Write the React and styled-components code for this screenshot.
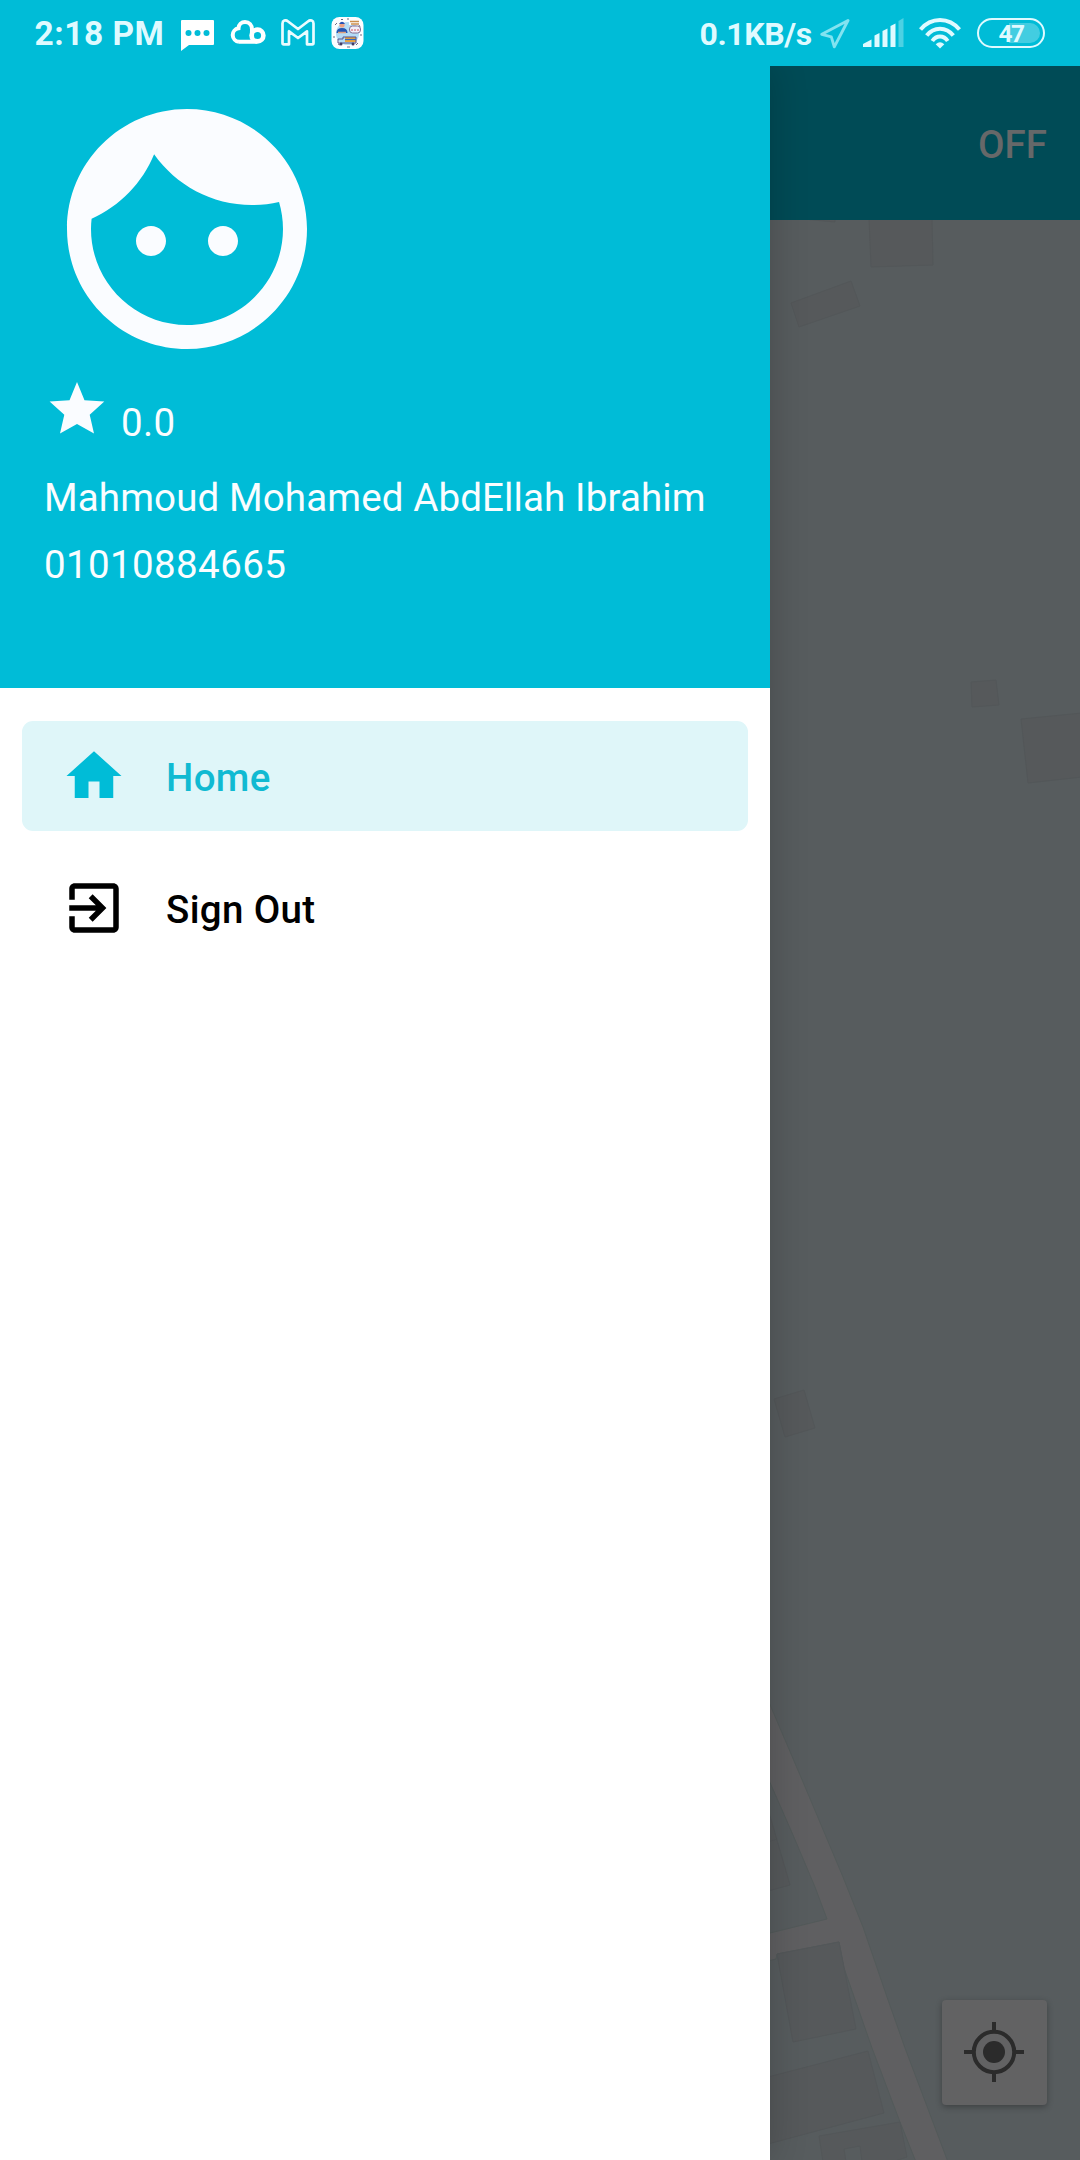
import React from "react";
import styled, { createGlobalStyle } from "styled-components";

const CYAN = "#00bcd7";
const STATUS = "#dffaff";

const GlobalStyle = createGlobalStyle`
  * { box-sizing: border-box; }
  body { margin: 0; font-family: Roboto, "Noto Sans", sans-serif; background: #fff; }
  svg { display: block; flex: none; }
`;

const Screen = styled.div`
  width: 1080px;
  height: 2160px;
  display: flex;
  flex-direction: column;
  overflow: hidden;
`;

const StatusBar = styled.header`
  position: relative;
  z-index: 2;
  height: 66px;
  flex: none;
  display: flex;
  justify-content: space-between;
  padding: 0 35px 0 34.500px;
  background: ${CYAN};
  color: ${STATUS};
`;

const StatusGroup = styled.div`
  display: flex;
  align-items: flex-start;
`;

const StatusText = styled.span`
  width: ${(p) => p.$width}px;
  font-size: ${(p) => p.$size}px;
  font-weight: 700;
  line-height: 68px;
  letter-spacing: ${(p) => p.$spacing || 0}px;
  white-space: nowrap;
`;

const StatusIcon = styled.svg`
  margin: ${(p) => p.$top}px 0 0 ${(p) => p.$gap}px;
`;

const Battery = styled.div`
  width: 68px;
  height: 30px;
  margin: 18px 0 0 16px;
  padding: 3px;
  border: 2.500px solid ${STATUS};
  border-radius: 15px;
  display: grid;
`;

const BatteryLevel = styled.div`
  grid-area: 1 / 1;
  border-radius: 10px;
  background: linear-gradient(90deg, transparent 47%, rgba(255, 255, 255, 0.26) 47%);
`;

const BatteryText = styled.span`
  grid-area: 1 / 1;
  align-self: center;
  text-align: center;
  font-size: 24.500px;
  font-weight: 700;
  line-height: 18px;
  letter-spacing: -1.500px;
  padding-top: 1px;
`;

const Body = styled.div`
  flex: 1;
  min-height: 0;
  display: flex;
`;

const Drawer = styled.aside`
  width: 770px;
  flex: none;
  z-index: 1;
  background: #fff;
  box-shadow: 0 0 36px rgba(0, 0, 0, 0.2);
`;

const Profile = styled.section`
  height: 622px;
  display: flex;
  flex-direction: column;
  align-items: flex-start;
  padding: 18.700px 44px 0;
  background: ${CYAN};
  color: #fafdff;
`;

const Avatar = styled.svg`
  margin-left: -1px;
  fill: #fafcff;
`;

const Rating = styled.div`
  height: 99.300px;
  display: flex;
  align-items: flex-start;
  padding: 9.300px 0 0 5px;
  gap: 16px;
`;

const ProfileText = styled.span`
  display: block;
  font-size: 38.500px;
  line-height: 51px;
  margin: ${(p) => p.$top || 0}px 0 0;
  letter-spacing: ${(p) => p.$spacing || 0}px;
  white-space: nowrap;
`;

const Nav = styled.nav`
  display: flex;
  flex-direction: column;
  gap: 22px;
  padding: 33px 22px;
`;

const NavItem = styled.a`
  height: 110px;
  display: flex;
  align-items: center;
  gap: 39px;
  padding-left: 39px;
  border-radius: 11px;
  font-size: 38.500px;
  font-weight: 500;
  line-height: 50px;
  letter-spacing: 0.350px;
  color: ${(p) => (p.$active ? "#10bad2" : "#000")};
  background: ${(p) => (p.$active ? "#dff6f9" : "transparent")};
  svg { fill: ${(p) => (p.$active ? CYAN : "#000")}; }
  span { padding-top: 3px; }
`;

const Main = styled.main`
  flex: 1;
  min-width: 0;
  display: flex;
  flex-direction: column;
`;

const AppBar = styled.div`
  height: 154px;
  flex: none;
  display: flex;
  justify-content: flex-end;
  align-items: center;
  padding: 2px 33px 0 0;
  background: #004b56;
  box-shadow: 0 2px 9px rgba(0, 0, 0, 0.22);
  color: #666869;
  font-size: 38.500px;
  font-weight: 500;
  z-index: 0;
`;

const MapArea = styled.div`
  position: relative;
  flex: 1;
  background: #575c5e;
`;

const LocateButton = styled.button`
  position: absolute;
  right: 33.500px;
  bottom: 55.500px;
  width: 105px;
  height: 105px;
  padding: 0;
  border: 0;
  border-radius: 4px;
  background: #626263;
  box-shadow: 0 2px 6px rgba(0, 0, 0, 0.3);
  display: grid;
  place-items: center;
`;

const buildings = [
  "23,-2 65,2 65,-2",
  "99,-2 101,47 163,45 162,-2",
  "21,83 81,61 90,86 29,107",
  "201,462 226,460 229,485 202,487",
  "251,499 312,493 312,557 258,563",
  "4,1179 34,1170 45,1208 15,1217",
  "-2,1589 20,1665 -2,1671",
  "7,1734 69,1722 86,1809 23,1822",
  "-2,1857 98,1831 114,1893 -2,1924",
];

function MapDrawing() {
  return (
    <svg width="310" height="1940" viewBox="0 0 310 1940">
      <path
        d="M-2 1480 L33 1562 L73 1657 L93 1707 L117 1777 L135 1828 L178 1942 H146 L130 1902 L102 1828 L74 1748 L69 1722 L7 1734 L6 1739 L-2 1741 V1713.500 L57 1699 L45 1667 L23 1615 L-2 1558 Z"
        fill="#5f5f61"
        stroke="#535a5a"
        strokeWidth="1"
      />
      <g fill="#56595b" stroke="#535759" strokeWidth="1">
        {buildings.map((points) => (
          <polygon key={points} points={points} />
        ))}
        <path
          d="M49 1916 L130 1902 L137 1937 L122 1942 H92 L90 1926 L74 1929 L76 1942 H53 Z"
        />
        <path d="M-2 1622 L7 1619" />
      </g>
    </svg>
  );
}

export default function App() {
  return (
    <>
      <GlobalStyle />
      <Screen>
        <StatusBar>
          <StatusGroup>
            <StatusText $width={146.500} $size={33.500} $spacing={0.500}>2:18 PM</StatusText>
            <StatusIcon $top={20} $gap={0} width="33" height="31" viewBox="0 0 33 31">
              <path d="M1 0H32Q33 0 33 1V24Q33 25 32 25H8L0 31V1Q0 0 1 0Z" fill="#fff" />
              <g fill={CYAN}>
                <circle cx="7.500" cy="13" r="3" />
                <circle cx="16.500" cy="13" r="3" />
                <circle cx="25.500" cy="13" r="3" />
              </g>
            </StatusIcon>
            <StatusIcon $top={20} $gap={15.500} width="36" height="24" viewBox="0 0 36 24">
              <path
                d="M9 21.800a6.800 6.800 0 0 1-.5-13.500C8.700 4.500 11.500 2 15 2c4.200 0 7 3 7 7.500l-.2 6.500M9 21.800H27"
                fill="none"
                stroke="#fff"
                strokeWidth="4"
              />
              <circle cx="27.500" cy="15.500" r="5.900" fill="none" stroke="#fff" strokeWidth="4.600" />
            </StatusIcon>
            <StatusIcon $top={19} $gap={15} width="34" height="27" viewBox="0 0 34 27">
              <path
                d="M1.500 4.500C1.500 1.500 4.600.5 6.800 2.200L17 10l10.200-7.800c2.200-1.700 5.300-.7 5.300 2.300V24q0 1.300-1.300 1.300H26V12.300L17 19 8 12.300v13H2.800Q1.500 25.300 1.500 24Z"
                fill="none"
                stroke="#eafcff"
                strokeWidth="2.700"
                strokeLinejoin="round"
              />
            </StatusIcon>
            <StatusIcon $top={17} $gap={16.500} width="33" height="33" viewBox="0 0 33 33">
              <rect width="32" height="32" x=".5" rx="8" fill="#fcfdff" />
              <circle cx="16.500" cy="16.500" r="11.500" fill="#b5dcf5" />
              <path d="M4 8l2-2M10 2.500h2M16 2h2M28 8l1 2M30 17v2M27 26l-2 2M19 30h-3M9 28l-2-1M3 21v-2" stroke="#6e6b80" />
              <path d="M18 2.500h11V8H18Z" fill="#fcfdff" />
              <circle cx="11" cy="8" r="2.600" fill="#eda184" />
              <path d="M8 7Q11 2.500 14 7Z" fill="#2752b4" />
              <path d="M5.500 16q0-5 5.500-5t5.500 5Z" fill="#2456b5" />
              <path d="M7 15.500h8" stroke="#e0a07c" strokeWidth="1.500" />
              <path d="M19 4.500h9M20 7h8" stroke="#cb8f4e" strokeWidth="1.300" />
              <rect x="18.500" y="9" width="11" height="7" rx="3" fill="#f1effa" stroke="#826f94" />
              <path d="M20 13h8" stroke="#cf5360" strokeDasharray="2 1" />
              <rect x="14" y="20" width="11" height="5" fill="#eca63e" />
              <path d="M7 26v-4h5v-2h13v6Z" fill="none" stroke="#57528c" />
              <path d="M14 22.500h11" stroke="#3269bd" strokeWidth="1.200" />
              <circle cx="10" cy="27" r="1.500" fill="#453d64" />
              <circle cx="22" cy="27" r="1.500" fill="#453d64" />
            </StatusIcon>
          </StatusGroup>
          <StatusGroup>
            <StatusText $width={120.500} $size={32} $spacing={-0.400}>0.1KB/s</StatusText>
            <StatusIcon $top={18} $gap={0} width="30" height="32" viewBox="0 0 30 32">
              <path
                d="M28 2.500L1.800 16.300L11.300 18.800L14.300 28.800Z"
                fill="none"
                stroke="#82e3f0"
                strokeWidth="2.900"
                strokeLinejoin="round"
              />
            </StatusIcon>
            <StatusIcon $top={18} $gap={12.500} width="41" height="29" viewBox="0 0 41 29" fill={STATUS}>
              <path d="M0 26L8.500 21.500V29H0Z" />
              <path d="M11.500 17.500L16.500 15V29H11.500Z" />
              <path d="M19.500 13L24.500 10.500V29H19.500Z" />
              <path d="M27.500 8L32.500 5.500V29H27.500Z" />
              <path d="M35.500 3L40.500 0V29H35.500Z" fill="#4dd1e3" />
            </StatusIcon>
            <StatusIcon $top={18} $gap={15.500} width="42" height="31" viewBox="0 0 42 31">
              <g fill="none" stroke={STATUS} strokeWidth="4">
                <path d="M1.500 11.500Q9.500 2 21 2T40.500 11.500" />
                <path d="M7.700 17.500Q13 10.700 21 10.700T34.300 17.500" />
                <path d="M13.300 23Q16.300 18.500 21 18.500T28.700 23" />
              </g>
              <path d="M16.700 26.200Q21 22.500 25.300 26.200L21 30.500Z" fill={STATUS} />
            </StatusIcon>
            <Battery>
              <BatteryLevel />
              <BatteryText>47</BatteryText>
            </Battery>
          </StatusGroup>
        </StatusBar>
        <Body>
          <Drawer>
            <Profile>
              <Avatar width="288" height="288" viewBox="0 0 24 24">
                <path d="M9 11.750c-.69 0-1.250.56-1.250 1.250s.56 1.250 1.250 1.250 1.250-.56 1.250-1.250-.56-1.250-1.250-1.250zm6 0c-.69 0-1.250.56-1.250 1.250s.56 1.250 1.250 1.250 1.250-.56 1.250-1.250-.56-1.250-1.250-1.250zM12 2C6.480 2 2 6.480 2 12s4.480 10 10 10 10-4.480 10-10S17.520 2 12 2zm0 18c-4.410 0-8-3.590-8-8 0-.29.02-.58.05-.86 2.360-1.050 4.230-2.980 5.210-5.370C11.070 8.330 14.050 10 17.420 10c.78 0 1.530-.09 2.250-.26.21.71.33 1.470.33 2.260 0 4.410-3.590 8-8 8z" />
              </Avatar>
              <Rating>
                <svg width="56" height="52" viewBox="0 0 56 52">
                  <path
                    d="M28 0L35.500 18.200L55.300 19.500L40.700 32.700L45 51.500L28 42L11 51.500L15.300 32.700L.6 19.500L20.500 18.200Z"
                    fill="#fafcff"
                  />
                </svg>
                <ProfileText $top={15} $spacing={0.350}>0.0</ProfileText>
              </Rating>
              <ProfileText $spacing={0.130}>Mahmoud Mohamed AbdEllah Ibrahim</ProfileText>
              <ProfileText $top={16} $spacing={0.380}>01010884665</ProfileText>
            </Profile>
            <Nav>
              <NavItem $active>
                <svg width="66" height="66" viewBox="0 0 24 24">
                  <path d="M10 20v-6h4v6h5v-8h3L12 3 2 12h3v8z" />
                </svg>
                <span>Home</span>
              </NavItem>
              <NavItem>
                <svg width="66" height="66" viewBox="0 0 24 24">
                  <path d="M10.090 15.590L11.500 17l5-5-5-5-1.410 1.410L12.670 11H3v2h9.670l-2.580 2.590zM19 3H5c-1.110 0-2 .9-2 2v4h2V5h14v14H5v-4H3v4c0 1.100.89 2 2 2h14c1.100 0 2-.9 2-2V5c0-1.100-.9-2-2-2z" />
                </svg>
                <span>Sign Out</span>
              </NavItem>
            </Nav>
          </Drawer>
          <Main>
            <AppBar>OFF</AppBar>
            <MapArea>
              <MapDrawing />
              <LocateButton aria-label="My location">
                <svg width="60" height="60" viewBox="0 0 60 60">
                  <circle cx="30" cy="30" r="20.200" fill="none" stroke="#2b2b2b" strokeWidth="4" />
                  <circle cx="30" cy="30" r="11" fill="#2b2b2b" />
                  <path d="M30 0V8M30 52V60M0 30H8M52 30H60" stroke="#2b2b2b" strokeWidth="4" />
                </svg>
              </LocateButton>
            </MapArea>
          </Main>
        </Body>
      </Screen>
    </>
  );
}
